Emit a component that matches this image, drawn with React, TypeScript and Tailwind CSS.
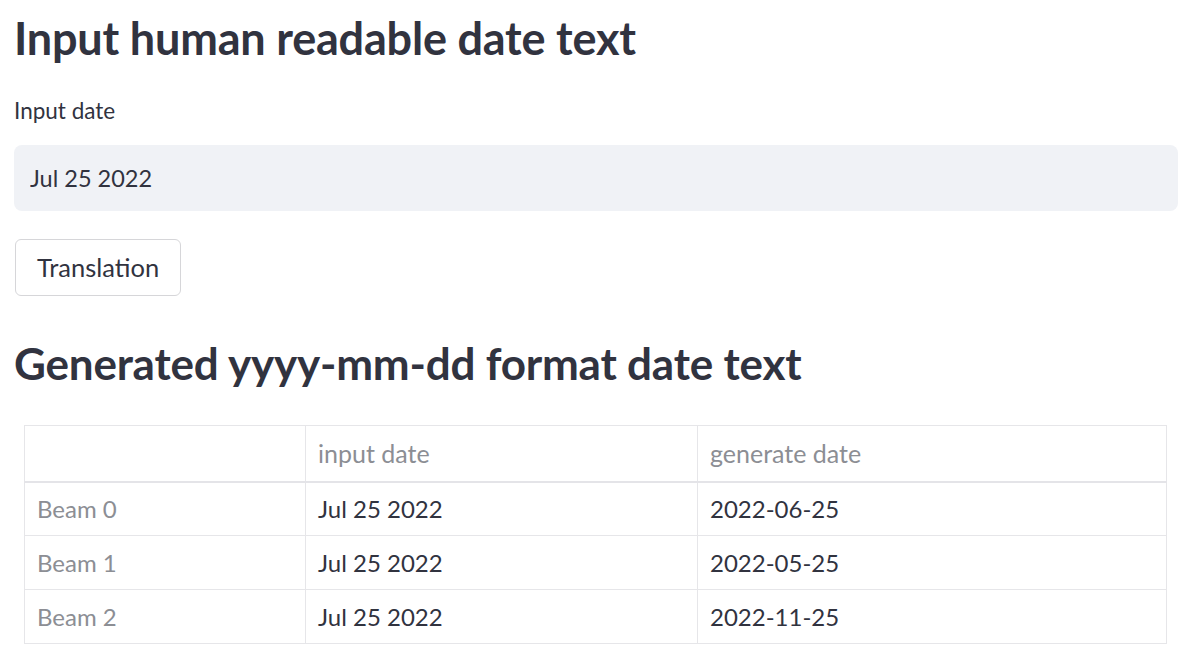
import { useState } from "react";

const rows = [
  { name: "Beam 0", input: "Jul 25 2022", generated: "2022-06-25" },
  { name: "Beam 1", input: "Jul 25 2022", generated: "2022-05-25" },
  { name: "Beam 2", input: "Jul 25 2022", generated: "2022-11-25" },
];

export default function App() {
  const [value, setValue] = useState("Jul 25 2022");

  return (
    <div className="min-h-screen bg-white text-[#31333f] font-['Lato','Liberation_Sans',sans-serif] px-[14px] pt-[12px]">
      {/* Titulo */}
      <h1 className="text-[45px] leading-[52px] font-bold tracking-[-0.2px]">
        Input human readable date text
      </h1>

      <label className="block mt-[33px] text-[22.5px] leading-[28px]">Input date</label>
      <input
        value={value}
        onChange={(e) => setValue(e.target.value)}
        className="mt-[20px] w-[1164px] h-[66px] rounded-[8px] bg-[#f0f2f6] px-[16px] text-[23.5px] outline-none"
      />

      <button className="block mt-[28px] ml-px h-[57px] px-[21px] rounded-[6px] border border-[#d6d6d9] bg-white text-[25.5px]">
        Translation
      </button>

      <h2 className="mt-[41px] text-[44px] leading-[52px] font-bold tracking-[-0.2px]">
        Generated yyyy-mm-dd format date text
      </h2>

      {/* Tabela de resultados */}
      <table className="mt-[36px] ml-[10px] w-[1143px] border-collapse text-[24px]">
        <thead>
          <tr className="h-[56px] border-b-2 border-[#e4e4e8]">
            <th className="w-[281px] border border-[#e6e6e9]"></th>
            <th className="w-[392px] border border-[#e6e6e9] px-[12px] text-left font-normal text-[#8c8e94] text-[25px]">
              input date
            </th>
            <th className="border border-[#e6e6e9] px-[12px] text-left font-normal text-[#8c8e94] text-[25px]">
              generate date
            </th>
          </tr>
        </thead>
        <tbody>
          {rows.map((r) => (
            <tr key={r.name} className="h-[54px]">
              <td className="border border-[#e6e6e9] px-[12px] text-[#8c8e94]">{r.name}</td>
              <td className="border border-[#e6e6e9] px-[12px]">{r.input}</td>
              <td className="border border-[#e6e6e9] px-[12px]">{r.generated}</td>
            </tr>
          ))}
        </tbody>
      </table>
    </div>
  );
}
